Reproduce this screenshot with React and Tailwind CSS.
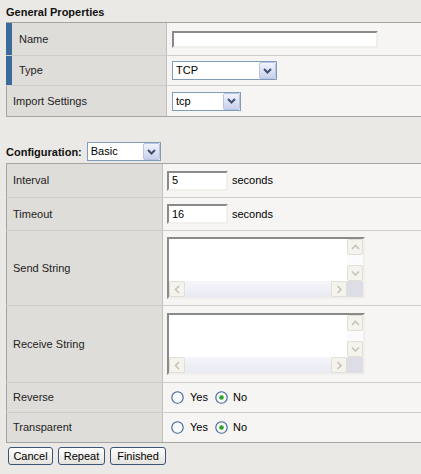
import React from "react";

function Chevron() {
  return (
    <svg width="9" height="6" viewBox="0 0 9 6">
      <polyline points="1,1 4.5,4.5 8,1" fill="none" stroke="#3f4f70" strokeWidth="2" />
    </svg>
  );
}

function Select({ value, w, h }) {
  return (
    <div className={`flex ${w} ${h} border border-[#7f9db9] bg-white`}>
      <span className="flex flex-1 items-center pl-[3px] text-[11px] text-black">{value}</span>
      <div className="flex w-[17px] items-center justify-center rounded-[2px] border border-[#b7c5e3] bg-gradient-to-b from-[#f1f3fc] to-[#c9d1ea]">
        <Chevron />
      </div>
    </div>
  );
}

function TextInput({ w, h, value }) {
  return (
    <div
      className={`flex items-center ${w} ${h} border-2 border-t-[#8a8a8a] border-l-[#8a8a8a] border-r-[#f0efeb] border-b-[#f0efeb] bg-white pl-[3px] text-[11px] text-black`}
    >
      {value}
    </div>
  );
}

function Arrow({ dir }) {
  const pts = {
    up: "1,5 4.5,1.5 8,5",
    down: "1,1.5 4.5,5 8,1.5",
    left: "5,1 1.5,4.5 5,8",
    right: "1.5,1 5,4.5 1.5,8",
  }[dir];
  const vert = dir === "up" || dir === "down";
  return (
    <svg width={vert ? 9 : 6} height={vert ? 6 : 9} viewBox={vert ? "0 0 9 6" : "0 0 6 9"}>
      <polyline points={pts} fill="none" stroke="#c6c4b6" strokeWidth="1.6" />
    </svg>
  );
}

function SBtn({ dir }) {
  return (
    <div className="flex h-[16px] w-[16px] items-center justify-center rounded-[2px] border border-[#e2e0d5] bg-[#f4f3ee]">
      <Arrow dir={dir} />
    </div>
  );
}

function TextArea() {
  return (
    <div className="flex h-[62px] w-[198px] flex-col border-2 border-t-[#8a8a8a] border-l-[#8a8a8a] border-r-[#f0efeb] border-b-[#f0efeb] bg-white">
      <div className="flex flex-1">
        <div className="flex-1" />
        <div className="flex w-[16px] flex-col justify-between bg-[#fbfbfd]">
          <SBtn dir="up" />
          <SBtn dir="down" />
        </div>
      </div>
      <div className="flex h-[16px]">
        <div className="flex flex-1 justify-between bg-gradient-to-b from-[#f6f6fa] to-[#e8e9f2]">
          <SBtn dir="left" />
          <SBtn dir="right" />
        </div>
        <div className="w-[16px] bg-[#dddde6]" />
      </div>
    </div>
  );
}

function Radio({ checked }) {
  return (
    <svg width="13" height="13" viewBox="0 0 13 13">
      <circle cx="6.5" cy="6.5" r="5.7" fill="#f8f8f8" stroke="#3d6597" strokeWidth="1.1" />
      {checked && <circle cx="6.5" cy="6.5" r="2.3" fill="#2aa62a" />}
    </svg>
  );
}

function RadioGroup() {
  return (
    <div className="flex items-center text-[11px] text-black">
      <Radio />
      <span className="ml-[6px]">Yes</span>
      <span className="ml-[7px] flex">
        <Radio checked />
      </span>
      <span className="ml-[5px]">No</span>
    </div>
  );
}

function Row1({ label, h, bar, last, children }) {
  return (
    <div className={`flex ${h} ${last ? "" : "border-b"} border-[#cfcdc8]`}>
      <div
        className={`flex w-[161px] items-center border-r border-[#c3c1bc] bg-[#dfddd9] text-[11px] text-[#222] ${
          bar ? "border-l-[6px] border-l-[#3a6b9b] pl-[7px]" : "border-l border-l-[#a6a4a0] pl-[6px]"
        }`}
      >
        {label}
      </div>
      <div className="flex flex-1 items-center bg-[#f6f5f3] pl-[5px]">{children}</div>
    </div>
  );
}

function Row2({ label, h, last, pl = "pl-[4px]", children }) {
  return (
    <div className={`flex ${h} ${last ? "" : "border-b"} border-[#cfcdc8]`}>
      <div className="flex w-[157px] items-center border-l border-r border-l-[#a6a4a0] border-r-[#c3c1bc] bg-[#dfddd9] pl-[6px] text-[11px] text-[#222]">
        {label}
      </div>
      <div className={`flex flex-1 items-center bg-[#f6f5f3] ${pl}`}>{children}</div>
    </div>
  );
}

function Button({ children, w }) {
  return (
    <div
      className={`flex h-[18px] ${w} items-center justify-center rounded-[3px] border border-[#3b5378] bg-gradient-to-b from-[#ffffff] to-[#e4e2dc] text-[11px] text-black`}
    >
      {children}
    </div>
  );
}

export default function App() {
  return (
    <div className="h-[474px] w-[421px] overflow-hidden bg-[#ebe9e5] font-['Liberation_Sans',Arial,sans-serif]">
      <div className="flex h-[22px] items-center pl-[6px] pt-[3px] text-[11px] font-bold text-[#111]">
        General Properties
      </div>
      <div className="ml-[6px] border-t border-b border-t-[#a6a4a0] border-b-[#a6a4a0]">
        <Row1 label="Name" h="h-[33px]" bar>
          <TextInput w="w-[206px]" h="h-[17px]" />
        </Row1>
        <Row1 label="Type" h="h-[30px]" bar>
          <Select value="TCP" w="w-[105px]" h="h-[19px]" />
        </Row1>
        <Row1 label="Import Settings" h="h-[30px]" last>
          <Select value="tcp" w="w-[69px]" h="h-[19px]" />
        </Row1>
      </div>

      <div className="flex h-[46px] items-end pb-[2px] pl-[6px]">
        <span className="mb-[1px] text-[11px] font-bold text-[#111]">Configuration:</span>
        <div className="ml-[5px]">
          <Select value="Basic" w="w-[74px]" h="h-[19px]" />
        </div>
      </div>

      <div className="ml-[6px] border-t border-b border-t-[#a6a4a0] border-b-[#a6a4a0]">
        <Row2 label="Interval" h="h-[34px]">
          <TextInput w="w-[61px]" h="h-[20px]" value="5" />
          <span className="ml-[4px] text-[11px] text-black">seconds</span>
        </Row2>
        <Row2 label="Timeout" h="h-[33px]">
          <TextInput w="w-[61px]" h="h-[20px]" value="16" />
          <span className="ml-[4px] text-[11px] text-black">seconds</span>
        </Row2>
        <Row2 label="Send String" h="h-[75px]">
          <TextArea />
        </Row2>
        <Row2 label="Receive String" h="h-[77px]">
          <TextArea />
        </Row2>
        <Row2 label="Reverse" h="h-[30px]" pl="pl-[8px]">
          <RadioGroup />
        </Row2>
        <Row2 label="Transparent" h="h-[29px]" pl="pl-[8px]" last>
          <RadioGroup />
        </Row2>
      </div>

      <div className="mt-[4px] flex gap-[5px] pl-[8px]">
        <Button w="w-[45px]">Cancel</Button>
        <Button w="w-[47px]">Repeat</Button>
        <Button w="w-[56px]">Finished</Button>
      </div>
    </div>
  );
}
